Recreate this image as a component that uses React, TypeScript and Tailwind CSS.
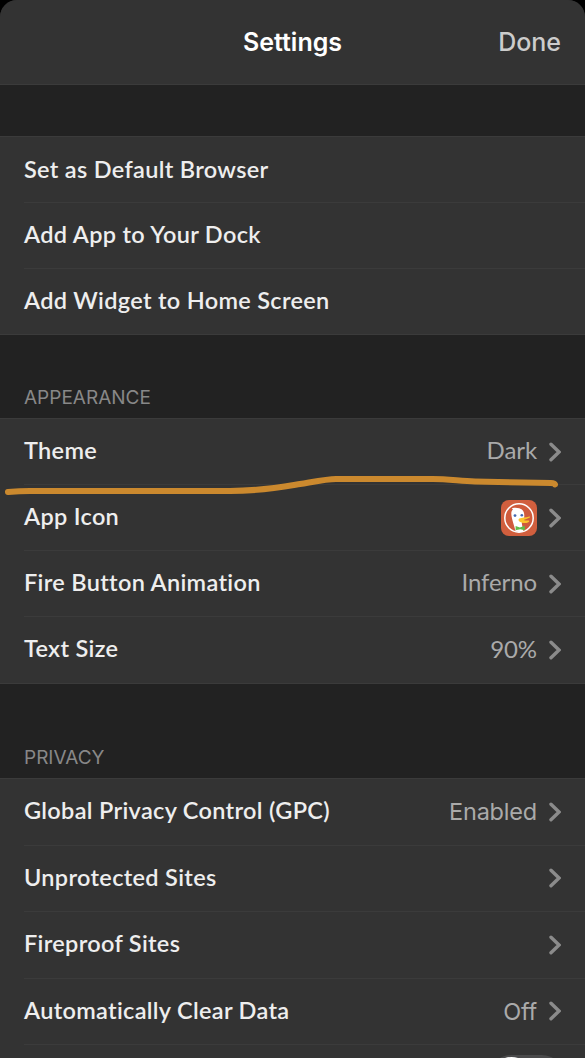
import type { ReactNode } from "react";
import clsx from "clsx";

type Item = {
  label: string;
  value?: string;
  system?: boolean;
  icon?: ReactNode;
  chevron?: boolean;
};

function Chevron() {
  return (
    <svg width="12" height="20" viewBox="0 0 12 20" fill="none" className="shrink-0">
      <path d="M2 2.2 10 10 2 17.8" stroke="#8b8b8b" strokeWidth="3.4" strokeLinecap="round" strokeLinejoin="miter" />
    </svg>
  );
}

function DuckIcon() {
  return (
    <svg width="36" height="36" viewBox="0 0 36 36" className="shrink-0">
      <rect width="36" height="36" rx="8" fill="#d15f3e" />
      <circle cx="18" cy="18" r="14.2" fill="#cf5b3c" stroke="#fff" strokeWidth="1.5" />
      <path
        d="M14.6 31.6C13.4 26 11.4 20.8 10.6 16.4c-.6-3.2-.4-5.5 1.4-6.9l-1.2-.9c.8-.7 1.8-.9 2.8-.8 4-.2 8 1.2 9.1 4.2.8 1.9.7 4.5.3 7l-2.2 4.2 1.5 8.2c-2.4.9-5.3.8-7.7.2z"
        fill="#fff"
      />
      <circle cx="14" cy="15.6" r="1.4" fill="#4468b0" />
      <circle cx="20.8" cy="15.2" r="1.3" fill="#4468b0" />
      <path
        d="M18.2 18.5c2.8-1.2 6.3-.7 10.2-2.1 1-.2.8 1-.1 1.4-1.8.9-4 1.5-5.8 2.1 1.8.7 3.9.6 5.2.5 1.1 0 .7 1.5-.9 2.1-2.4 1-6 .6-8.1-.8-1.2-.8-1.7-2.3-.5-3.2z"
        fill="#fcc62b"
      />
      <path d="M14.6 25.9l4.3 1.5 4.9-1.6v4.4l-4.6-1-4.6 1z" fill="#62bc47" />
    </svg>
  );
}

const LAUNCH: Item[] = [
  { label: "Set as Default Browser" },
  { label: "Add App to Your Dock" },
  { label: "Add Widget to Home Screen" },
];

const APPEARANCE: Item[] = [
  { label: "Theme", value: "Dark", chevron: true },
  { label: "App Icon", icon: <DuckIcon />, chevron: true },
  { label: "Fire Button Animation", value: "Inferno", chevron: true },
  { label: "Text Size", value: "90%", chevron: true },
];

const PRIVACY: Item[] = [
  { label: "Global Privacy Control (GPC)", value: "Enabled", system: true, chevron: true },
  { label: "Unprotected Sites", chevron: true },
  { label: "Fireproof Sites", chevron: true },
  { label: "Automatically Clear Data", value: "Off", system: true, chevron: true },
];

function Row({ item, last }: { item: Item; last: boolean }) {
  return (
    <div className="flex-1 pl-6">
      <div className={clsx("flex h-full items-center pr-6", !last && "border-b border-[#3b3b3b]")}>
        <span className="flex-1 pb-[2px] text-[23.5px] font-semibold tracking-[0.32px] whitespace-nowrap text-[#eeeeee]">
          {item.label}
        </span>
        {item.value && (
          <span
            className={clsx(
              "whitespace-nowrap text-[#aaaaaa]",
              item.system ? "font-['Inter',sans-serif] text-[23.5px] tracking-[-0.2px]" : "pb-[3px] text-[24px] tracking-[-0.1px]"
            )}
          >
            {item.value}
          </span>
        )}
        {item.icon}
        {item.chevron && (
          <span className="ml-3">
            <Chevron />
          </span>
        )}
      </div>
    </div>
  );
}

function Group({ items, className, children }: { items: Item[]; className: string; children?: ReactNode }) {
  return (
    <div className={clsx("flex flex-col border-y border-[#3b3b3b] bg-[#333333]", className)}>
      {items.map((item, i) => (
        <Row key={item.label} item={item} last={!children && i === items.length - 1} />
      ))}
      {children}
    </div>
  );
}

function SectionTitle({ children }: { children: ReactNode }) {
  return (
    <h2 className="px-6 pb-2 font-['Inter',sans-serif] text-[19px] leading-6 text-[#888888]">{children}</h2>
  );
}

export default function App() {
  return (
    <div className="h-[1058px] w-full overflow-hidden bg-black font-['Lato',sans-serif]">
      <div className="relative flex h-full flex-col overflow-hidden rounded-t-[17px] bg-[#222222]">
        <header className="grid h-[85px] shrink-0 grid-cols-3 items-center border-b border-[#3b3b3b] bg-[#333333] px-6 pt-[2px] font-['Inter',sans-serif] text-[25px]">
          <span />
          <h1 className="text-center font-semibold text-white">Settings</h1>
          <button className="text-right font-medium text-[#cccccc]">Done</button>
        </header>

        <main className="flex flex-col">
          <section className="pt-[51px]">
            <Group items={LAUNCH} className="h-[199px] pt-px" />
          </section>
          <section className="pt-[51px]">
            <SectionTitle>APPEARANCE</SectionTitle>
            <Group items={APPEARANCE} className="h-[266px]" />
          </section>
          <section className="pt-[62px]">
            <SectionTitle>PRIVACY</SectionTitle>
            <Group items={PRIVACY} className="h-[333px]">
              <div className="flex h-[65px] shrink-0 items-center justify-end pt-px pr-5">
                <div className="h-[47px] w-[77px] rounded-full bg-[#4a4a4b] p-[2px]">
                  <div className="size-[43px] rounded-full bg-white" />
                </div>
              </div>
            </Group>
          </section>
        </main>

        {/* hand-drawn marker line under the theme row */}
        <svg className="pointer-events-none absolute top-[470px] left-0" width="585" height="30" viewBox="0 470 585 30" fill="none">
          <path
            d="M8 492C15 491.4 20 491 30 491H230C262 491 285 486.5 300 484S327 479 336 479H433C448 479 460 481 475 481.5L551 483Q554.5 483 555 484.5"
            stroke="#cb892e"
            strokeWidth="6"
            strokeLinecap="round"
            strokeLinejoin="round"
          />
        </svg>
      </div>
    </div>
  );
}
